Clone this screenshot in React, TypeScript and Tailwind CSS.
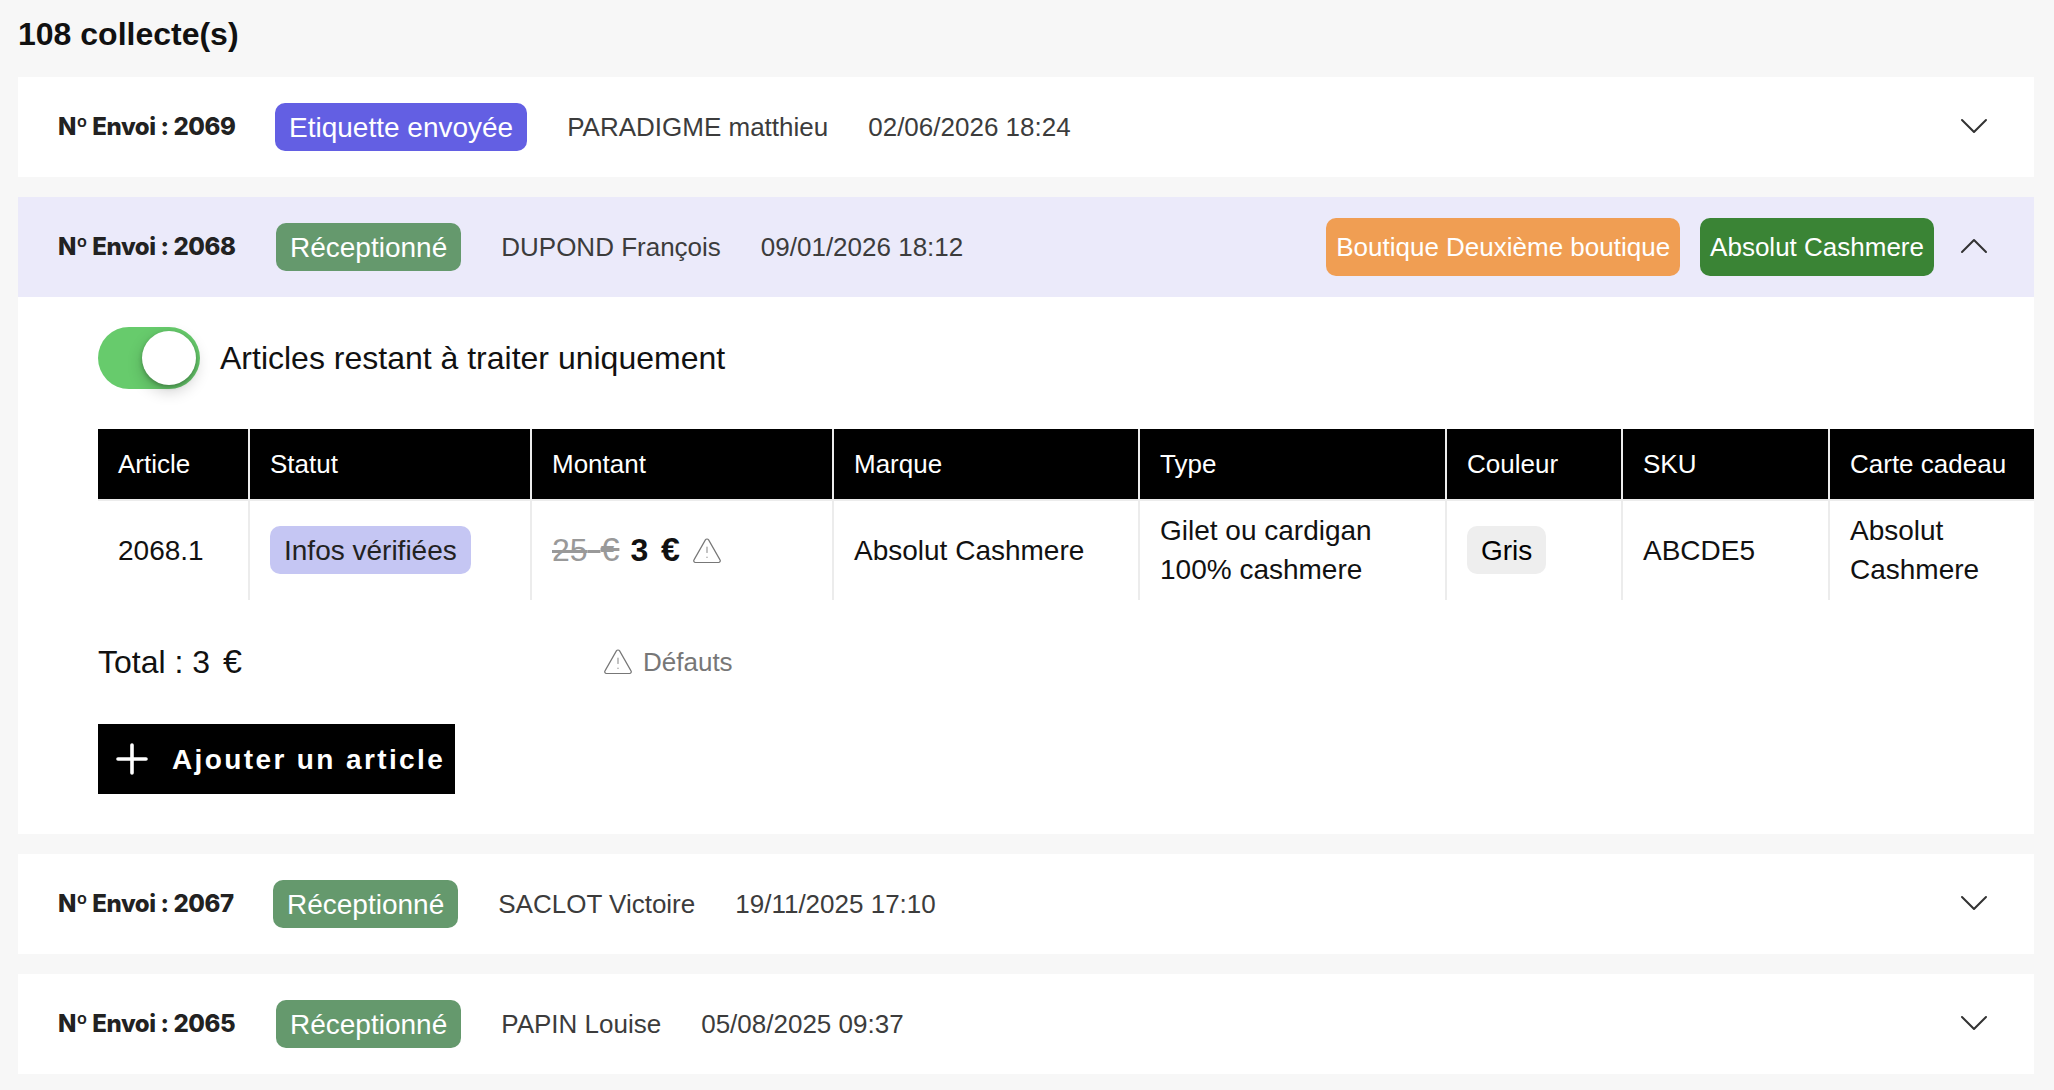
import React from 'react';
import { BsChevronDown, BsChevronUp } from 'react-icons/bs';

const ENVOIS = [
  { id: 2069, statut: 'Etiquette envoyée', color: 'bg-[#635fe3]', width: 'w-[177px]', client: 'PARADIGME matthieu', date: '02/06/2026 18:24', open: false },
  { id: 2068, statut: 'Réceptionné', color: 'bg-[#65996d]', width: 'w-[178px]', client: 'DUPOND François', date: '09/01/2026 18:12', open: true },
  { id: 2067, statut: 'Réceptionné', color: 'bg-[#65996d]', width: 'w-[175px]', client: 'SACLOT Victoire', date: '19/11/2025 17:10', open: false },
  { id: 2065, statut: 'Réceptionné', color: 'bg-[#65996d]', width: 'w-[178px]', client: 'PAPIN Louise', date: '05/08/2025 09:37', open: false },
];

const COLUMNS = ['Article', 'Statut', 'Montant', 'Marque', 'Type', 'Couleur', 'SKU', 'Carte cadeau'];

const GRID = 'grid grid-cols-[152px_282px_302px_306px_307px_176px_207px_204px]';

const Warning: React.FC = () => (
  <svg width="28" height="26" viewBox="0 0 28 26" fill="none" stroke="currentColor" strokeWidth="1.2" strokeLinecap="round" strokeLinejoin="round" className="shrink-0">
    <path d="M12.4 1.9a1.9 1.9 0 0 1 3.2 0L27 21.9a1.7 1.7 0 0 1-1.5 2.6h-23A1.7 1.7 0 0 1 1 21.9z" />
    <path d="M14 9v5.5M14 19v.4" strokeOpacity="0.75" />
  </svg>
);

const Euros: React.FC<{ value: number }> = ({ value }) => (
  <span className="[word-spacing:4px]">{value} <span className="text-[34px] leading-none">€</span></span>
);

const Detail: React.FC = () => (
  <div className="pl-20 pt-[30px] h-[537px]">
    <div className="flex items-center gap-5">
      <div className="flex w-[102px] h-[62px] p-1 justify-end rounded-full bg-[#67cb6c]">
        <div className="size-[54px] rounded-full bg-white shadow-[0_6px_16px_rgba(0,0,0,0.2),0_2px_4px_rgba(0,0,0,0.25)]" />
      </div>
      <span className="text-[32px] leading-none">Articles restant à traiter uniquement</span>
    </div>

    <div className="mt-10">
      <div className={`${GRID} border-b-2 border-[#ececec] bg-black text-white text-[26px]`}>
        {COLUMNS.map((col, i) => (
          <div key={col} className={`h-[70px] flex items-center px-5 border-[#ececec] ${i < 7 ? 'border-r-2' : ''}`}>{col}</div>
        ))}
      </div>
      <div className={`${GRID} h-[99px] text-[28px] leading-[39px] *:flex *:items-center *:px-5 *:border-[#ececec] *:not-last:border-r-2`}>
        <div>2068.1</div>
        <div className="pb-0.5">
          <span className="h-12 px-3.5 leading-[50px] rounded-[10px] bg-[#c5c6f3] text-[#222]">Infos vérifiées</span>
        </div>
        <div className="text-[32px]">
          <span className="text-[#999] line-through decoration-[3px]"><Euros value={25} /></span>
          <span className="ml-[11px] mr-[13px] font-bold"><Euros value={3} /></span>
          <span className="text-[#777]"><Warning /></span>
        </div>
        <div>Absolut Cashmere</div>
        <div className="pb-0.5">Gilet ou cardigan<br />100% cashmere</div>
        <div className="pb-0.5">
          <span className="h-12 px-3.5 leading-[50px] rounded-[10px] bg-[#eee] text-black">Gris</span>
        </div>
        <div>ABCDE5</div>
        <div className="pb-0.5">Absolut Cashmere</div>
      </div>
    </div>

    <div className="mt-10 flex items-center h-11">
      <span className="w-[506px] text-[32px] leading-10">Total : <Euros value={3} /></span>
      <span className="flex items-center gap-[11px] text-[26px] text-[#777]"><Warning />Défauts</span>
    </div>

    <button className="mt-10 flex items-center w-[357px] h-[70px] pl-[18px] bg-black text-white text-[28px] font-bold tracking-[0.085em] whitespace-nowrap">
      <svg width="32" height="32" viewBox="0 0 32 32" stroke="currentColor" strokeWidth="3.6" strokeLinecap="round" className="mr-6 shrink-0">
        <path d="M16 2v28M2 16h28" />
      </svg>
      <span className="pt-0.5">Ajouter un article</span>
    </button>
  </div>
);

export default function App() {
  return (
    <div className="h-[1090px] overflow-hidden bg-[#f7f7f7] pl-[18px] pr-5 text-[#111] font-['Liberation_Sans',Arial,sans-serif]">
      <h1 className="h-[77px] pt-[14px] text-[32px] leading-10 font-bold">108 collecte(s)</h1>
      <div className="flex flex-col gap-5">
        {ENVOIS.map((envoi) => (
          <section key={envoi.id} className="bg-white">
            <header className={`flex items-center h-[100px] pl-10 pr-11 text-[26px] text-[#3c3c3c] ${envoi.open ? 'bg-[#ebeafa]' : ''}`}>
              <span className={`${envoi.width} mr-10 whitespace-nowrap font-['Inter',sans-serif] text-[24px] font-extrabold tracking-[-0.017em] text-[#222]`}>
                Nº Envoi : {envoi.id}
              </span>
              <span className={`h-12 px-3.5 leading-[50px] rounded-[10px] text-[28px] text-white ${envoi.color}`}>{envoi.statut}</span>
              <span className="ml-10">{envoi.client}</span>
              <span className="ml-10">{envoi.date}</span>
              <div className="ml-auto flex items-center text-white">
                {envoi.open && (
                  <>
                    <span className="h-[58px] px-2.5 leading-[58px] mr-5 rounded-[10px] bg-[#f09e53]">Boutique Deuxième boutique</span>
                    <span className="h-[58px] px-2.5 leading-[58px] mr-6 rounded-[10px] bg-[#3a8435]">Absolut Cashmere</span>
                  </>
                )}
                {envoi.open ? <BsChevronUp size={32} color="#333" className="mb-0.5" /> : <BsChevronDown size={32} color="#333" className="mb-0.5" />}
              </div>
            </header>
            {envoi.open && <Detail />}
          </section>
        ))}
      </div>
    </div>
  );
}
